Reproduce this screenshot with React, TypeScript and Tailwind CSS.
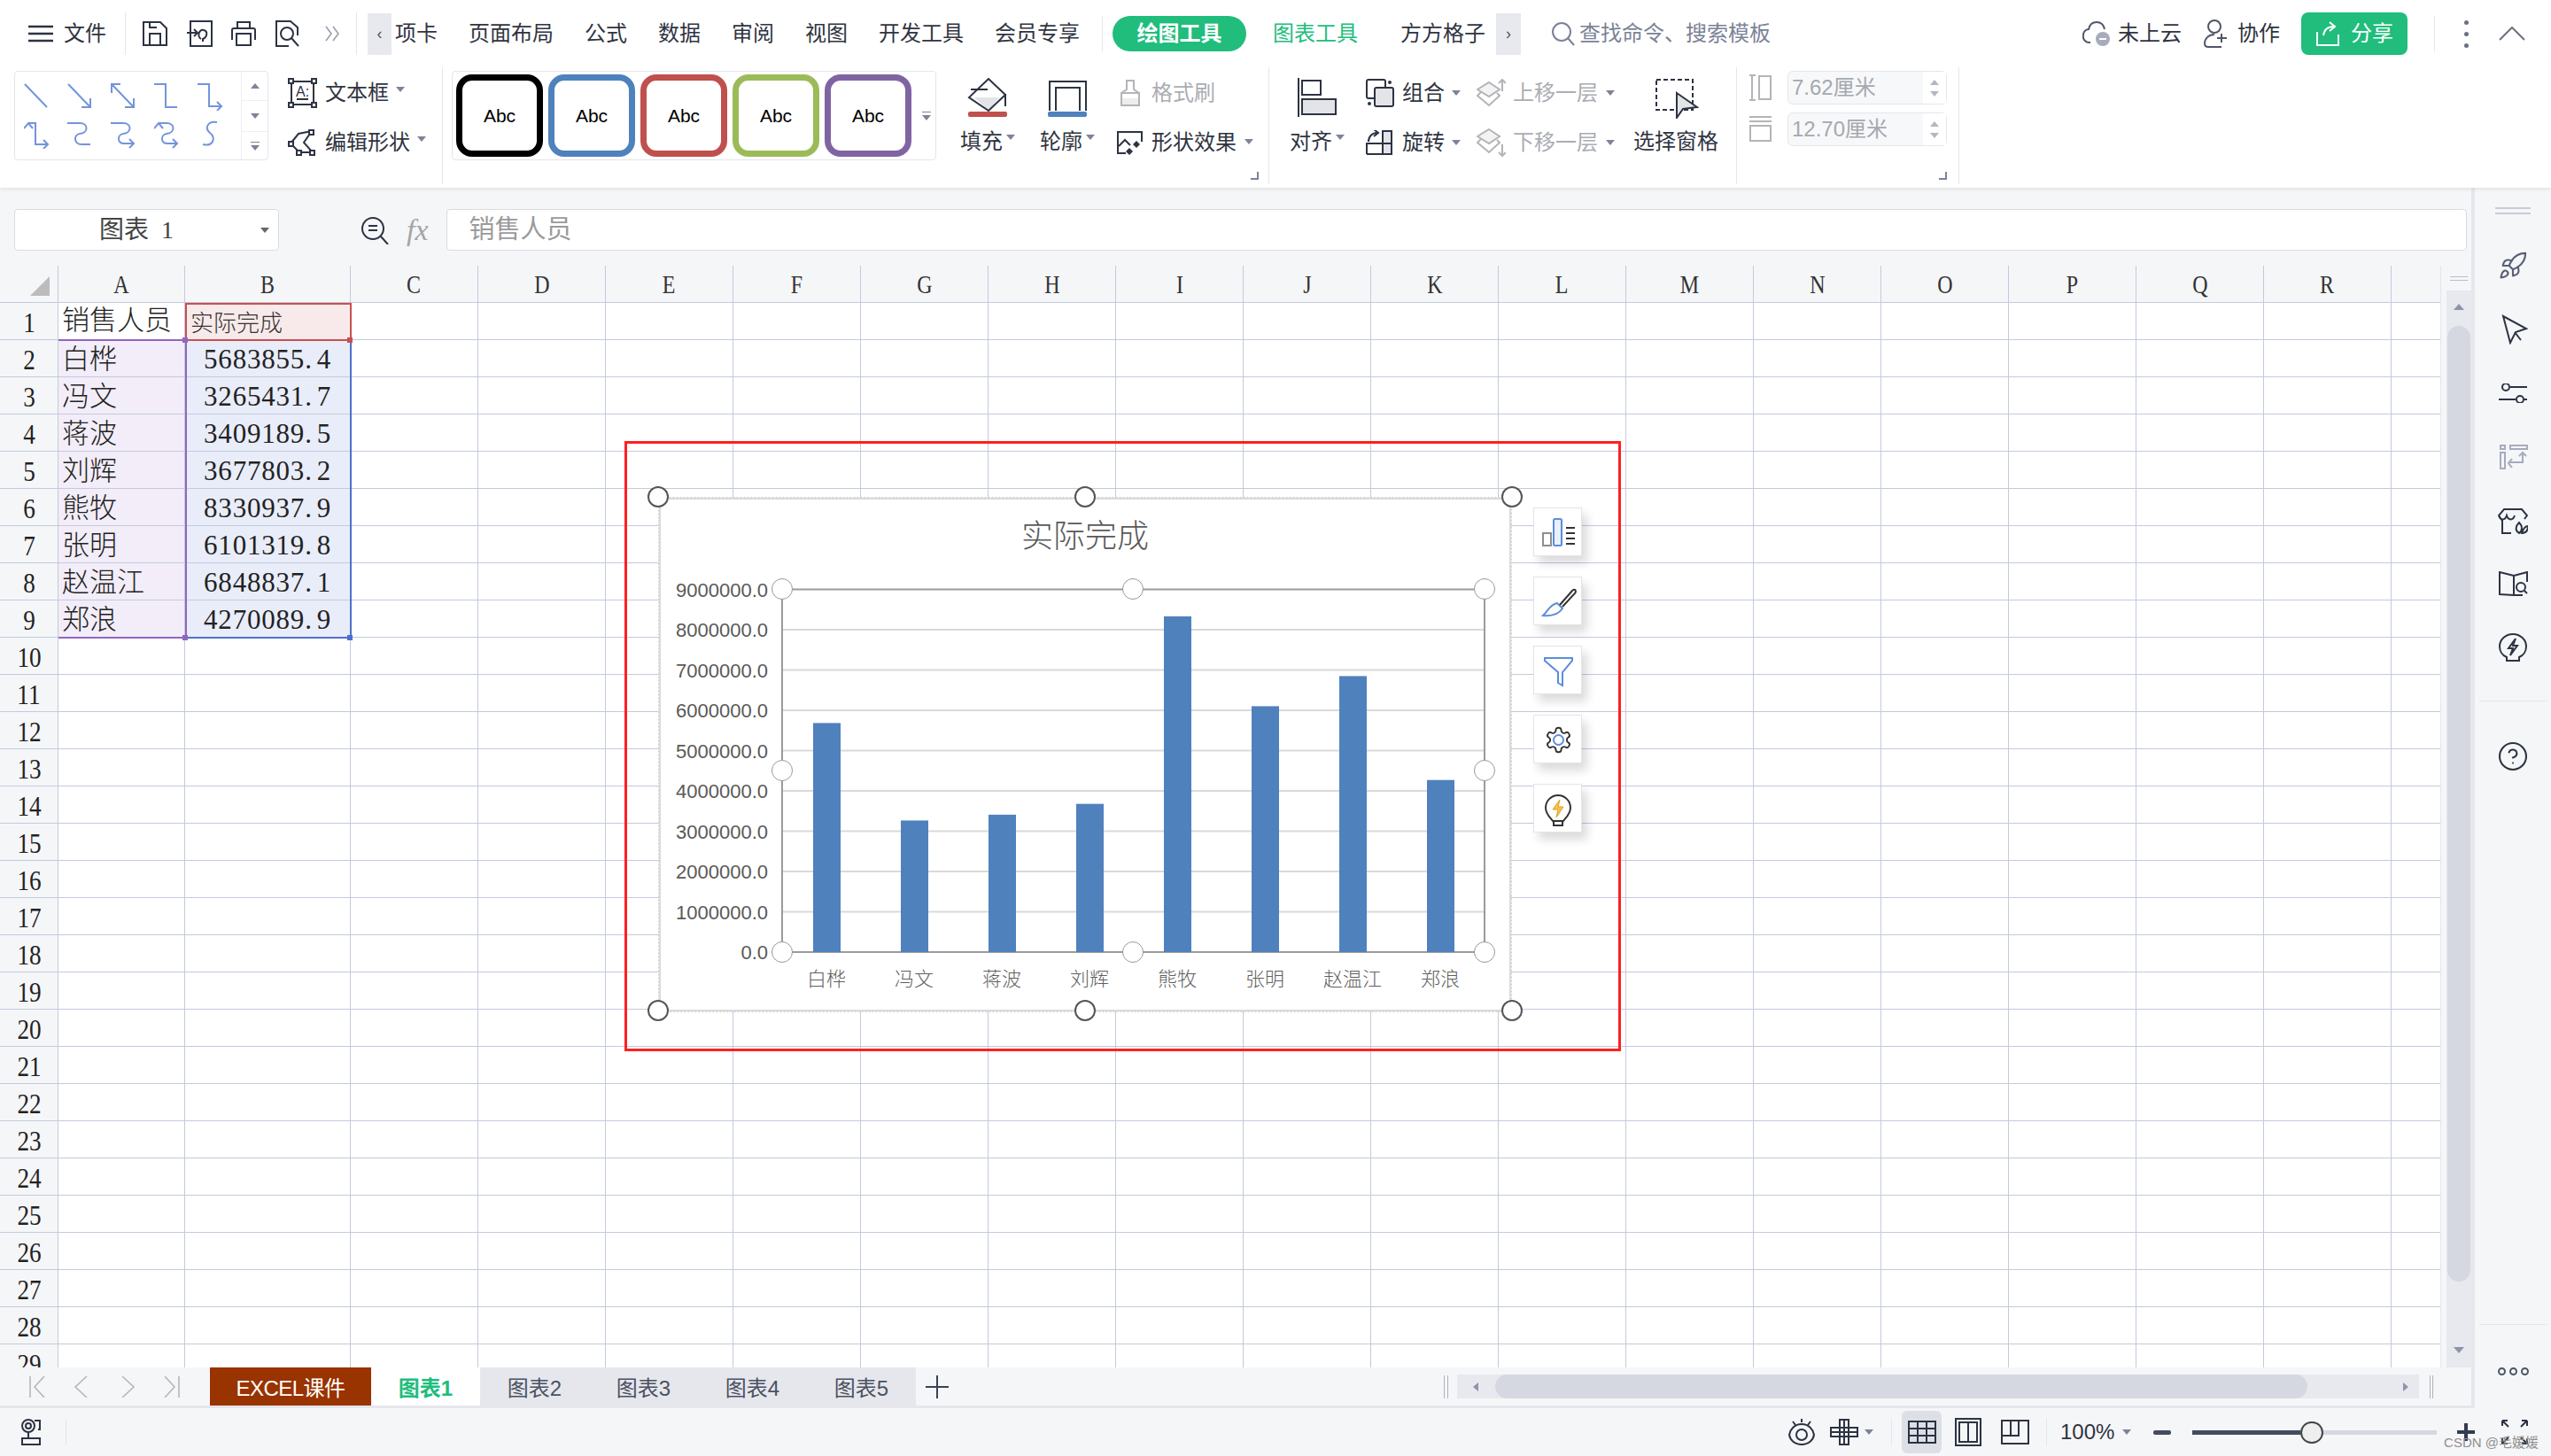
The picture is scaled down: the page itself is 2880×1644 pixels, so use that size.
import type { ReactNode } from "react"
import { Rocket, CircleHelp } from "lucide-react"

const INK = "#2c3342"
const GREY = "#b4b4b8"

function Ico({ w, h, children, className = "" }: { w: number; h: number; children: ReactNode; className?: string }) {
  return (
    <svg width={w} height={h} viewBox={`0 0 ${w} ${h}`} fill="none" stroke={INK} strokeWidth="2" className={"shrink-0 " + className}>
      {children}
    </svg>
  )
}

function Caret({ className = "" }: { className?: string }) {
  return <span className={"inline-block h-0 w-0 shrink-0 border-x-[5px] border-t-[6px] border-x-transparent border-t-[#7d8497] " + className} />
}

function Sep({ className = "" }: { className?: string }) {
  return <div className={"w-px shrink-0 bg-[#e4e6ec] " + className} />
}

function Corner({ className = "" }: { className?: string }) {
  return <span className={"absolute h-[9px] w-[9px] border-b-2 border-r-2 border-[#7d8497] " + className} />
}

/* ---------- top tab bar ---------- */

const tabs = ["项卡", "页面布局", "公式", "数据", "审阅", "视图", "开发工具", "会员专享"]

function TabBar() {
  return (
    <div className="flex h-[72px] shrink-0 items-center bg-white pl-[32px] pt-[4px] text-[24px] text-[#30343f]">
      <Ico w={28} h={20}>
        <path d="M0 2H28M0 10H28M0 18H28" strokeWidth="2.4" />
      </Ico>
      <span className="ml-[12px]">文件</span>
      <Sep className="ml-[21px] h-[48px]" />
      <Ico w={30} h={30} className="ml-[18px]">
        <path d="M2 2H21L28 9V28H2ZM9 28V15H21V28M9 2V8H17" />
      </Ico>
      <Ico w={32} h={32} className="ml-[20px]">
        <path d="M5 2H29V30H5ZM1 15H13M9 11l4 4-4 4M17 22c-5-3-2-12 3-10 5 1 4 8-1 10v3" />
      </Ico>
      <Ico w={30} h={30} className="ml-[18px]">
        <path d="M8 9V2H22V9M2 22V11q0-2 2-2H26q2 0 2 2V22M7 15H23V28H7Z" />
      </Ico>
      <Ico w={30} h={32} className="ml-[20px]">
        <path d="M16 30H2V2H18L26 9V18" />
        <circle cx="14" cy="16" r="7" />
        <path d="M19 21L27 30" />
      </Ico>
      <svg width="18" height="18" viewBox="0 0 18 18" fill="none" stroke="#9a9fae" strokeWidth="1.6" className="ml-[26px] shrink-0">
        <path d="M2 1l6 8-6 8M10 1l6 8-6 8" />
      </svg>
      <Sep className="ml-[18px] h-[48px]" />
      <div className="ml-[12px] flex h-[47px] w-[27px] items-center justify-center bg-[#e7e9ee] text-[18px] text-[#555]">‹</div>
      <div className="ml-[4px] flex gap-[35px]">
        {tabs.map((t) => (
          <span key={t} className="whitespace-nowrap">{t}</span>
        ))}
      </div>
      <Sep className="ml-[25px] h-[40px]" />
      <div className="ml-[11px] flex h-[40px] w-[151px] items-center justify-center rounded-[20px] bg-[#20bd7c] font-bold text-white">绘图工具</div>
      <span className="ml-[30px] text-[#20bd7c]">图表工具</span>
      <span className="ml-[48px]">方方格子</span>
      <div className="ml-[12px] flex h-[47px] w-[28px] items-center justify-center bg-[#e7e9ee] text-[18px] text-[#555]">›</div>
      <svg width="28" height="28" viewBox="0 0 28 28" fill="none" stroke="#7c8296" strokeWidth="2" className="ml-[34px] shrink-0">
        <circle cx="12" cy="12" r="10" />
        <path d="M19 19l7 8" />
      </svg>
      <span className="ml-[4px] text-[#7c8296]">查找命令、搜索模板</span>
      <div className="ml-[352px] flex items-center">
        <svg width="32" height="30" viewBox="0 0 32 30" fill="none" stroke="#4f5668" strokeWidth="2" className="shrink-0">
          <path d="M9 25H8C3 25 0 21 1 16c0-4 4-6 6-6 1-5 4-8 9-8 5 0 8 3 9 8" />
          <circle cx="23" cy="21" r="8" fill="#a6abbd" stroke="none" />
          <path d="M19 21H27" stroke="#fff" />
        </svg>
        <span className="ml-[8px]">未上云</span>
        <svg width="28" height="34" viewBox="0 0 28 34" fill="none" stroke="#4f5668" strokeWidth="2" className="ml-[25px] shrink-0">
          <circle cx="12" cy="9" r="7" />
          <path d="M12 18C5 18 1 23 1 28c0 3 2 4 4 4H20M20 17v10M15 22H26" />
        </svg>
        <span className="ml-[10px]">协作</span>
        <div className="ml-[24px] flex h-[48px] w-[120px] items-center justify-center gap-[12px] rounded-[8px] bg-[#20bd7c] text-white">
          <svg width="28" height="28" viewBox="0 0 28 28" fill="none" stroke="#fff" strokeWidth="2" className="shrink-0">
            <path d="M2 12V27H26V15M9 16C10 9 14 6 21 6M16 1l6 5-6 5" />
          </svg>
          <span>分享</span>
        </div>
        <Sep className="ml-[30px] h-[40px]" />
        <div className="ml-[33px] flex flex-col gap-[8px]">
          <i className="h-[5px] w-[5px] rounded-full bg-[#6b7080]" />
          <i className="h-[5px] w-[5px] rounded-full bg-[#6b7080]" />
          <i className="h-[5px] w-[5px] rounded-full bg-[#6b7080]" />
        </div>
        <svg width="30" height="16" viewBox="0 0 30 16" fill="none" stroke="#6b7080" strokeWidth="2" className="ml-[34px] shrink-0">
          <path d="M1 15L15 1L29 15" />
        </svg>
      </div>
    </div>
  )
}

/* ---------- ribbon ---------- */

const connectors = [
  "M1 2L26 28",
  "M1 2L26 28M26 18V28H16",
  "M1 2L26 28M26 18V28H16M1 12V2H11",
  "M0 2H13V28H26",
  "M0 2H13V27H27M22 22l5 5-5 5",
  "M0 9l5-6 5 6M5 3H13V27H27M22 22l5 5-5 5",
  "M0 3H14C24 3 24 14 14 15 7 16 7 27 16 27H26",
  "M0 3H14C24 3 24 14 14 15 7 16 7 27 16 26H26M21 21l5 5-5 5",
  "M0 9l5-6 5 6M5 3H14C24 3 24 14 14 15 7 16 7 27 16 26H26M21 21l5 5-5 5",
  "M22 2C11 0 8 9 14 14 21 19 18 30 6 27",
]

function ConnectorGallery() {
  return (
    <div className="ml-[16px] flex h-[101px] w-[287px] shrink-0 rounded-[4px] border border-[#e4e6ec]">
      <div className="grid w-[255px] grid-cols-5 grid-rows-2 py-[6px] pr-[10px]">
        {connectors.map((d) => (
          <div key={d} className="flex items-center justify-center">
            <svg width="30" height="32" viewBox="0 0 30 32" fill="none" stroke="#7394dc" strokeWidth="2">
              <path d={d} />
            </svg>
          </div>
        ))}
      </div>
      <div className="flex flex-1 flex-col border-l border-[#eceef2]">
        <div className="flex h-[33px] items-center justify-center border-b border-[#eceef2]">
          <Caret className="rotate-180" />
        </div>
        <div className="flex h-[35px] items-center justify-center border-b border-[#eceef2]">
          <Caret />
        </div>
        <div className="flex flex-1 flex-col items-center justify-center gap-[3px]">
          <i className="h-px w-[10px] bg-[#7d8497]" />
          <Caret />
        </div>
      </div>
    </div>
  )
}

function Row({ children, className = "" }: { children: ReactNode; className?: string }) {
  return <div className={"flex h-[50px] items-center whitespace-nowrap " + className}>{children}</div>
}

function Tall({ w, icon, label, caret = true }: { w: number; icon: ReactNode; label: string; caret?: boolean }) {
  return (
    <div className="flex shrink-0 flex-col items-center pt-[8px]" style={{ width: w }}>
      <div className="flex h-[46px] items-start justify-center">{icon}</div>
      <div className="mt-[8px] flex h-[36px] items-center whitespace-nowrap">
        <span>{label}</span>
        {caret && <Caret className="mb-[10px] ml-[4px]" />}
      </div>
    </div>
  )
}

const swatches = ["border-black", "border-[#4f81bd]", "border-[#c0504d]", "border-[#9bbb59]", "border-[#8064a2]"]

function StyleGallery() {
  return (
    <div className="ml-[10px] flex h-[101px] w-[547px] shrink-0 items-center gap-[6px] rounded-[4px] border border-[#e4e6ec] pl-[4px]">
      {swatches.map((c) => (
        <div key={c} className={"flex h-[93px] w-[98px] shrink-0 items-center justify-center rounded-[18px] border-[7px] bg-white font-['Liberation_Sans'] text-[21px] text-black " + c}>
          Abc
        </div>
      ))}
      <div className="ml-[6px] flex flex-col items-center gap-[3px]">
        <i className="h-px w-[10px] bg-[#7d8497]" />
        <Caret />
      </div>
    </div>
  )
}

function SizeInput({ value }: { value: string }) {
  return (
    <div className="flex h-[38px] w-[180px] items-center rounded-[6px] border border-[#e4e6ec] bg-[#f7f8fa] pl-[4px] text-[#a6a8ae]">
      <span className="flex-1">{value}</span>
      <div className="flex h-full w-[26px] flex-col items-center justify-center gap-[7px] bg-white">
        <Caret className="rotate-180 border-t-[#b3b7c2]" />
        <Caret className="border-t-[#b3b7c2]" />
      </div>
    </div>
  )
}

function Ribbon() {
  return (
    <div className="relative z-10 flex h-[140px] shrink-0 items-start bg-white pt-[8px] text-[24px] text-[#30343f] shadow-[0_2px_4px_rgba(0,0,0,0.08)]">
      <ConnectorGallery />
      <div className="ml-[22px] flex w-[174px] shrink-0 flex-col gap-[6px]">
        <Row>
          <Ico w={33} h={34}>
            <path d="M4 4H29V30H4Z" />
            <rect x="1" y="1" width="5" height="5" fill="#fff" />
            <rect x="27" y="1" width="5" height="5" fill="#fff" />
            <rect x="1" y="28" width="5" height="5" fill="#fff" />
            <rect x="27" y="28" width="5" height="5" fill="#fff" />
            <text x="9" y="21" stroke="none" fill={INK} className="font-['Liberation_Sans'] text-[16px]">A:</text>
            <path d="M10 24H23" />
          </Ico>
          <span className="ml-[9px]">文本框</span>
          <Caret className="mb-[8px] ml-[8px]" />
        </Row>
        <Row>
          <Ico w={33} h={30}>
            <path d="M27 2L12 5L3 16L13 26L28 26L18 15Z" />
            <rect x="24" y="1" width="5" height="5" fill="#fff" />
            <rect x="1" y="14" width="5" height="5" fill="#fff" />
            <rect x="25" y="24" width="5" height="5" fill="#fff" />
            <rect x="10" y="24" width="5" height="5" fill="#fff" />
          </Ico>
          <span className="ml-[9px]">编辑形状</span>
          <Caret className="mb-[8px] ml-[8px]" />
        </Row>
      </div>
      <Sep className="-mt-[4px] h-[132px]" />
      <StyleGallery />
      <div className="relative ml-[11px] flex h-[132px] w-[364px] shrink-0">
        <Tall
          w={94}
          label="填充"
          icon={
            <Ico w={50} h={44}>
              <path d="M10 22H38L26 37Z" fill="#e3e4e8" stroke="none" />
              <path d="M26 1L45 19L26 37L4 22ZM6 13H25M45 18V32" />
              <rect x="3" y="38" width="44" height="6" rx="2" fill="#c0504d" stroke="none" />
            </Ico>
          }
        />
        <div className="ml-[3px]">
          <Tall
            w={80}
            label="轮廓"
            icon={
              <Ico w={46} h={44}>
                <path d="M3 37V4H44V37M10 37V11H37V37" />
                <rect x="1" y="38" width="44" height="6" rx="2" fill="#4f81bd" stroke="none" />
              </Ico>
            }
          />
        </div>
        <div className="ml-[15px] flex flex-col gap-[6px]">
          <Row className="text-[#aaadb3]">
            <svg width="24" height="32" viewBox="0 0 24 32" fill="none" stroke={GREY} strokeWidth="2" className="ml-[4px] shrink-0">
              <path d="M2 16H22V30H2ZM2 16L8 12V2H16V12L22 16" />
              <path d="M3 22H21V29H3Z" fill="#eeeeef" stroke="none" />
            </svg>
            <span className="ml-[12px]">格式刷</span>
          </Row>
          <Row>
            <Ico w={31} h={29}>
              <path d="M11 26H2V2H29V13M3 18L10 11L16 17" />
              <path d="M23 12l4 4-4 4-4-4ZM15 20l4 4-4 4-4-4Z" fill={INK} stroke="none" />
            </Ico>
            <span className="ml-[9px]">形状效果</span>
            <Caret className="mb-[2px] ml-[9px]" />
          </Row>
        </div>
        <Corner className="bottom-[9px] right-[11px]" />
      </div>
      <Sep className="-mt-[4px] h-[132px]" />
      <div className="ml-[14px]">
        <Tall
          w={80}
          label="对齐"
          icon={
            <Ico w={50} h={44}>
              <path d="M4 0V44" />
              <rect x="8" y="3" width="21" height="16" />
              <rect x="8" y="24" width="38" height="17" fill="#e3e4e8" />
            </Ico>
          }
        />
      </div>
      <div className="ml-[15px] flex w-[125px] shrink-0 flex-col gap-[6px]">
        <Row>
          <Ico w={32} h={32}>
            <rect x="1" y="1" width="21" height="21" rx="2" />
            <rect x="10" y="10" width="21" height="21" rx="2" fill="#e3e4e8" />
            <circle cx="27" cy="4" r="2" fill={INK} stroke="none" />
            <circle cx="4" cy="28" r="2" fill={INK} stroke="none" />
          </Ico>
          <span className="ml-[9px]">组合</span>
          <Caret className="ml-[8px]" />
        </Row>
        <Row>
          <Ico w={32} h={28}>
            <rect x="19" y="1" width="10" height="26" fill="#e3e4e8" />
            <path d="M1 27V15H29M3 13C3 7 7 3 13 3M9 -1l5 4-5 4" />
            <path d="M1 27H29" />
          </Ico>
          <span className="ml-[9px]">旋转</span>
          <Caret className="ml-[8px]" />
        </Row>
      </div>
      <div className="flex w-[177px] shrink-0 flex-col gap-[6px] text-[#aaadb3]">
        <Row>
          <svg width="33" height="32" viewBox="0 0 33 32" fill="none" stroke={GREY} strokeWidth="2" className="shrink-0">
            <path d="M14 4L26 12L14 20L1 12Z" fill="#f3f3f4" />
            <path d="M5 15L1 19L14 30L26 19L23 16" />
            <path d="M29 14V1M25 5l4-4 4 4" />
          </svg>
          <span className="ml-[8px]">上移一层</span>
          <Caret className="ml-[9px]" />
        </Row>
        <Row>
          <svg width="33" height="32" viewBox="0 0 33 32" fill="none" stroke={GREY} strokeWidth="2" className="shrink-0">
            <path d="M14 1L26 9L14 17L1 9Z" fill="#f3f3f4" />
            <path d="M5 12L1 16L14 27L26 16L23 13" />
            <path d="M29 18V31M25 27l4 4 4-4" />
          </svg>
          <span className="ml-[8px]">下移一层</span>
          <Caret className="ml-[9px]" />
        </Row>
      </div>
      <Tall
        w={96}
        label="选择窗格"
        caret={false}
        icon={
          <Ico w={50} h={46} className="ml-[2px]">
            <path d="M2 2H43V36H2Z" strokeDasharray="5 3" />
            <path d="M25 17L48 33L32 35L25 45Z" fill="#e3e4e8" />
          </Ico>
        }
      />
      <Sep className="-mt-[4px] ml-[20px] h-[132px]" />
      <div className="relative flex h-[132px] w-[250px] shrink-0 flex-col gap-[9px] pl-[13px]">
        <div className="flex items-center">
          <svg width="27" height="30" viewBox="0 0 27 30" fill="none" stroke={GREY} strokeWidth="2" className="shrink-0">
            <path d="M1 1H8M1 29H8M4 1V29M12 2H25V28H12Z" />
          </svg>
          <div className="ml-[17px]">
            <SizeInput value="7.62厘米" />
          </div>
        </div>
        <div className="flex items-center">
          <svg width="27" height="30" viewBox="0 0 27 30" fill="none" stroke={GREY} strokeWidth="2" className="shrink-0">
            <path d="M1 1H26M1 6H26M2 11H25V28H2Z" />
          </svg>
          <div className="ml-[17px]">
            <SizeInput value="12.70厘米" />
          </div>
        </div>
        <Corner className="bottom-[9px] right-[13px]" />
      </div>
      <Sep className="-mt-[4px] h-[132px]" />
    </div>
  )
}

/* ---------- formula bar ---------- */

function FormulaBar() {
  return (
    <div className="flex h-[88px] shrink-0 items-start pl-[16px] pt-[24px]">
      <div className="flex h-[47px] w-[299px] shrink-0 items-center rounded-[4px] border border-[#d9dbe2] bg-white pl-[95px] pr-[10px] font-['Liberation_Serif','Noto_Sans_CJK_SC',serif] text-[28px] text-[#444]">
        <span className="flex-1 whitespace-pre">图表  1</span>
        <Caret className="border-t-[#666]" />
      </div>
      <svg width="32" height="32" viewBox="0 0 32 32" fill="none" stroke={INK} strokeWidth="2" className="ml-[92px] mt-[8px] shrink-0">
        <circle cx="14" cy="14" r="12" />
        <path d="M9 11H19M9 16H19M23 23L31 32" />
      </svg>
      <span className="ml-[20px] mt-[4px] font-['Liberation_Serif',serif] text-[34px] italic leading-[40px] text-[#a3a5a8]">fx</span>
      <div className="ml-[20px] flex h-[47px] w-[2281px] shrink-0 items-center rounded-[4px] border border-[#d9dbe2] bg-white pl-[25px] font-['Liberation_Serif','Noto_Sans_CJK_SC',serif] text-[29px] text-[#9a9a9a]">
        销售人员
      </div>
    </div>
  )
}

/* ---------- sheet ---------- */

const letters = "ABCDEFGHIJKLMNOPQRS".split("")
const data: [string, string, string, number][] = [
  ["白桦", "5683855.", "4", 5683855.4],
  ["冯文", "3265431.", "7", 3265431.7],
  ["蒋波", "3409189.", "5", 3409189.5],
  ["刘辉", "3677803.", "2", 3677803.2],
  ["熊牧", "8330937.", "9", 8330937.9],
  ["张明", "6101319.", "8", 6101319.8],
  ["赵温江", "6848837.", "1", 6848837.1],
  ["郑浪", "4270089.", "9", 4270089.9],
]
const rowNums = Array.from({ length: 29 }, (_, i) => i + 1)
const line = "border-b border-r border-[#c3cadc]"

function Cell({ row, col }: { row: number; col: number }) {
  if (col === 0 && row === 1) {
    return <div className={"flex items-center whitespace-nowrap pl-[4px] text-[31px] font-light text-[#222] " + line}>销售人员</div>
  }
  if (col === 1 && row === 1) {
    return <div className={"flex items-end whitespace-nowrap bg-[#f8eaea] pl-[6px] text-[26px] font-light leading-[34px] text-[#333] " + line}>实际完成</div>
  }
  if (col === 0 && row <= 9) {
    return <div className={"flex items-center whitespace-nowrap bg-[#f2edf8] pl-[4px] pt-[3px] text-[31px] font-light text-[#222] " + line}>{data[row - 2][0]}</div>
  }
  if (col === 1 && row <= 9) {
    return (
      <div className={"flex items-center justify-end whitespace-pre bg-[#e9edf9] pr-[21px] pt-[3px] text-[31px] tracking-[0.8px] text-[#222] " + line}>
        <span className="pr-[5px]">{data[row - 2][1]}</span>
        <span>{data[row - 2][2]}</span>
      </div>
    )
  }
  return <div className={line} />
}

function Handle({ x, y, big }: { x: number; y: number; big?: boolean }) {
  return <circle cx={x} cy={y} r={big ? 11 : 11.5} fill="#fff" stroke={big ? "#555" : "#999"} strokeWidth={big ? 2 : 1} />
}

const ticks = [0, 1, 2, 3, 4, 5, 6, 7, 8, 9]
const plotL = 883
const plotB = 1075
const plotH = 409.5

function Chart() {
  return (
    <svg viewBox="730 548 990 607" width="990" height="607" className="absolute left-[21px] top-[47px] font-['Liberation_Sans','Noto_Sans_CJK_SC',sans-serif]">
      <rect x="745" y="563" width="960" height="578" fill="#fff" stroke="#dadada" strokeWidth="2" />
      <rect x="743.5" y="561.5" width="963" height="581" fill="none" stroke="#cfcfcf" strokeWidth="1" strokeDasharray="2 2" />
      <text x="1225" y="618" textAnchor="middle" className="fill-[#595959] text-[36px] font-light">实际完成</text>
      {ticks.map((t) => {
        const y = plotB - (plotH * t) / 9
        return (
          <g key={t}>
            <line x1={plotL} x2="1676" y1={y} y2={y} stroke={t === 0 || t === 9 ? "#9a9a9f" : "#d9d9d9"} strokeWidth="2" />
            <text x="867" y={y + 8} textAnchor="end" className="fill-[#595959] text-[22px]">{t === 0 ? "0.0" : `${t}000000.0`}</text>
          </g>
        )
      })}
      <line x1={plotL} x2={plotL} y1="665" y2="1075" stroke="#9a9a9f" strokeWidth="2" />
      <line x1="1676" x2="1676" y1="665" y2="1075" stroke="#9a9a9f" strokeWidth="2" />
      {data.map(([name, , , v], i) => {
        const h = (v / 9000000) * plotH
        return (
          <g key={name}>
            <rect x={918 + i * 99} y={plotB - h} width="31" height={h} fill="#4f81bd" />
            <text x={933 + i * 99} y="1113" textAnchor="middle" className="fill-[#5f5f5f] text-[22px] font-light">{name}</text>
          </g>
        )
      })}
      <Handle x={883} y={665} />
      <Handle x={1279} y={665} />
      <Handle x={1676} y={665} />
      <Handle x={883} y={870} />
      <Handle x={1676} y={870} />
      <Handle x={883} y={1075} />
      <Handle x={1279} y={1075} />
      <Handle x={1676} y={1075} />
      <Handle x={743} y={561} big />
      <Handle x={1225} y={561} big />
      <Handle x={1707} y={561} big />
      <Handle x={743} y={1141} big />
      <Handle x={1225} y={1141} big />
      <Handle x={1707} y={1141} big />
    </svg>
  )
}

function ChartButtons() {
  return (
    <div className="absolute left-[1022px] top-[72px] flex flex-col gap-[23px]">
      <ChartBtn>
        <rect x="10" y="28" width="9" height="14" stroke="#8e8e8e" />
        <rect x="22" y="12" width="9" height="30" rx="1.5" fill="#eaf0fb" stroke="#5b8ddc" />
        <path d="M36 22H46M36 28H46M36 34H46M36 40H46" stroke="#333" />
      </ChartBtn>
      <ChartBtn>
        <path d="M10 43C16 38 17 31 26 29L32 35C28 41 20 44 10 43Z" stroke="#5b8ddc" />
        <path d="M29 31L43 15C46 12 48 15 46 18L32 33" stroke="#333" />
      </ChartBtn>
      <ChartBtn>
        <path d="M12 13H43V16L32 29V44L27 41V29L12 16Z" stroke="#5b8ddc" />
      </ChartBtn>
      <ChartBtn>
        <g transform="translate(11 11) scale(1.375)" strokeWidth="1.4">
          <path d="M12.22 2h-.44a2 2 0 0 0-2 2v.18a2 2 0 0 1-1 1.73l-.43.25a2 2 0 0 1-2 0l-.15-.08a2 2 0 0 0-2.73.73l-.22.38a2 2 0 0 0 .73 2.73l.15.1a2 2 0 0 1 1 1.72v.51a2 2 0 0 1-1 1.74l-.15.09a2 2 0 0 0-.73 2.73l.22.38a2 2 0 0 0 2.73.73l.15-.08a2 2 0 0 1 2 0l.43.25a2 2 0 0 1 1 1.73V20a2 2 0 0 0 2 2h.44a2 2 0 0 0 2-2v-.18a2 2 0 0 1 1-1.73l.43-.25a2 2 0 0 1 2 0l.15.08a2 2 0 0 0 2.73-.73l.22-.39a2 2 0 0 0-.73-2.73l-.15-.08a2 2 0 0 1-1-1.74v-.5a2 2 0 0 1 1-1.74l.15-.09a2 2 0 0 0 .73-2.73l-.22-.38a2 2 0 0 0-2.73-.73l-.15.08a2 2 0 0 1-2 0l-.43-.25a2 2 0 0 1-1-1.73V4a2 2 0 0 0-2-2z" stroke="#333" />
        </g>
        <circle cx="27.5" cy="27.5" r="5.5" stroke="#5b8ddc" />
      </ChartBtn>
      <ChartBtn>
        <path d="M21 41C18 37 13 33 13 26a14 14 0 0 1 28 0C41 33 36 37 33 41H21ZM22 41V46H32V41" stroke="#333" />
        <path d="M29 17L21 28H27L25 37L33 25H27Z" fill="#f3c44d" stroke="#e0a020" strokeWidth="1" />
      </ChartBtn>
    </div>
  )
}

function ChartBtn({ children }: { children: ReactNode }) {
  return (
    <div className="h-[55px] w-[55px] border border-[#e4e4e4] bg-white shadow-[6px_8px_10px_rgba(0,0,0,0.14)]">
      <svg width="55" height="55" viewBox="0 0 55 55" fill="none" strokeWidth="2">
        {children}
      </svg>
    </div>
  )
}

function Square({ className }: { className: string }) {
  return <i className={"absolute h-[6px] w-[6px] " + className} />
}

function VScroll() {
  return (
    <div className="flex w-[35px] shrink-0 flex-col border-l border-[#e4e6ec]">
      <div className="flex h-[28px] flex-col items-center justify-center gap-[3px] pl-[6px]">
        <i className="h-px w-[20px] bg-[#b9bdc9]" />
        <i className="h-px w-[20px] bg-[#b9bdc9]" />
      </div>
      <div className="ml-[6px] flex flex-1 flex-col items-center bg-[#e8e9ee] px-[1px] pt-[15px]">
        <Caret className="rotate-180 border-x-[6px] border-t-[7px] border-t-[#8d94ab]" />
        <div className="mt-[18px] h-[1079px] w-full rounded-full bg-[#d5d8e0]" />
        <Caret className="mt-[74px] border-x-[6px] border-t-[7px] border-t-[#8d94ab]" />
      </div>
    </div>
  )
}

function Sheet() {
  return (
    <div className="flex h-[1244px] shrink-0">
      <div className="relative w-[2755px] shrink-0 overflow-hidden">
        <div className="grid w-[2844px] grid-cols-[66px_143px_187px_repeat(17,144px)] auto-rows-[42px] bg-white font-['Liberation_Serif','Noto_Sans_CJK_SC',serif]">
          <div className="flex items-center justify-end border-b border-r border-[#c3cadc] bg-[#f5f6f8] pr-[9px]">
            <svg width="22" height="22" viewBox="0 0 22 22" className="mt-[5px]">
              <path d="M22 0V22H0Z" fill="#bcbcbc" />
            </svg>
          </div>
          {letters.map((l) => (
            <div key={l} className="flex items-center justify-center border-b border-r border-[#c3cadc] bg-[#f5f6f8] text-[30px] text-[#333]">
              <span className="scale-x-[0.8]">{l}</span>
            </div>
          ))}
          {rowNums.map((r) => (
            <div key={r} className="contents">
              <div className="flex items-center justify-center border-b border-r border-[#c3cadc] bg-[#f5f6f8] pt-[2px] text-[32px] text-[#222]">
                <span className="scale-x-[0.85]">{r}</span>
              </div>
              {letters.map((l, c) => (
                <Cell key={l} row={r} col={c} />
              ))}
            </div>
          ))}
        </div>
        {/* selection marks over the data range */}
        <div className="absolute left-[66px] top-[83px] h-[338px] w-[145px] border-y-2 border-r-2 border-[#9166c0]" />
        <div className="absolute left-[211px] top-[85px] h-[336px] w-[186px] border-b-2 border-r-2 border-[#4d70d0]" />
        <div className="absolute left-[209px] top-[42px] h-[43px] w-[188px] border-2 border-[#c85050]" />
        <Square className="left-[206px] top-[81px] bg-[#9166c0]" />
        <Square className="left-[206px] top-[417px] bg-[#9166c0]" />
        <Square className="left-[392px] top-[417px] bg-[#4d70d0]" />
        <Square className="left-[392px] top-[81px] bg-[#c85050]" />
        {/* chart with the red marker frame */}
        <div className="absolute left-[705px] top-[198px] h-[689px] w-[1125px] border-[3px] border-[#ff2020]">
          <div className="relative left-[1px]">
            <Chart />
            <ChartButtons />
          </div>
        </div>
      </div>
      <VScroll />
    </div>
  )
}

function SheetTabs() {
  return (
    <div className="flex h-[46px] shrink-0 items-start border-b-[3px] border-[#e6e7ec] text-[24px] leading-[43px]">
      <div className="flex h-[43px] w-[237px] shrink-0 items-center pl-[33px]">
        <svg width="170" height="24" viewBox="0 0 170 24" fill="none" stroke="#b5b7bd" strokeWidth="1.6">
          <path d="M1 0V24M17 0L6 12L17 24M65 0L52 12L65 24M105 0L118 12L105 24M153 0L164 12L153 24M169 0V24" />
        </svg>
      </div>
      <div className="flex h-[43px] w-[182px] items-center justify-center bg-[#993300] pt-[3px] tracking-[-0.5px] text-white">EXCEL课件</div>
      <div className="flex h-[43px] w-[123px] items-center justify-center bg-white pt-[3px] font-bold text-[#20bd7c]">图表1</div>
      {["图表2", "图表3", "图表4", "图表5"].map((t) => (
        <div key={t} className="flex h-[43px] w-[123px] items-center justify-center bg-[#e6e7ec] pt-[3px] text-[#4b5163]">{t}</div>
      ))}
      <svg width="26" height="26" viewBox="0 0 26 26" stroke="#3b4254" strokeWidth="2" className="ml-[11px] mt-[9px] shrink-0">
        <path d="M13 0V26M0 13H26" />
      </svg>
      <div className="ml-[559px] mt-[9px] flex h-[26px] gap-[3px]">
        <i className="w-px bg-[#aeb2bd]" />
        <i className="w-px bg-[#aeb2bd]" />
      </div>
      <div className="ml-[10px] mt-[8px] flex h-[27px] w-[1086px] items-center bg-[#e8e9ee]">
        <Caret className="ml-[16px] h-0 w-0 rotate-90 border-t-[#8d94ab]" />
        <div className="ml-[17px] h-full w-[917px] rounded-full bg-[#d5d8e0]" />
        <Caret className="ml-[106px] rotate-[-90deg] border-t-[#8d94ab]" />
      </div>
      <div className="ml-[12px] mt-[9px] flex h-[26px] gap-[2px]">
        <i className="w-px bg-[#aeb2bd]" />
        <i className="w-px bg-[#aeb2bd]" />
      </div>
    </div>
  )
}

/* ---------- right side panel ---------- */

function SidePanel() {
  return (
    <div className="flex w-[90px] shrink-0 flex-col items-center border-l-[4px] border-[#e6e7ec] text-[#4d5568]">
      <div className="mt-[22px] flex h-[8px] flex-col justify-between">
        <i className="h-[2px] w-[40px] bg-[#c9ccd4]" />
        <i className="h-[2px] w-[40px] bg-[#c9ccd4]" />
      </div>
      <Rocket size={34} strokeWidth={1.5} className="mt-[41px] text-[#586074]" />
      <Ico w={34} h={34} className="mt-[38px]">
        <path d="M6 2L32 16L20 20L14 32Z M19 20L26 29" />
      </Ico>
      <Ico w={34} h={22} className="mt-[44px]">
        <circle cx="9" cy="4" r="4" fill="none" />
        <path d="M14 4H33M1 18H20M30 18H33" />
        <circle cx="25" cy="18" r="4" />
      </Ico>
      <svg width="34" height="28" viewBox="0 0 34 28" fill="none" stroke="#a6abbd" strokeWidth="2" className="mt-[47px] shrink-0">
        <rect x="3" y="1" width="5" height="4" />
        <rect x="3" y="9" width="5" height="18" />
        <rect x="14" y="1" width="19" height="4" />
        <path d="M28 10V20H13M16 16l-4 5 4 5M24 13l4-4 4 4" />
      </svg>
      <Ico w={34} h={30} className="mt-[44px]">
        <path d="M5 14L1 8L7 1H27L33 8L30 12M5 12V28H15M1 8C3 14 8 14 10 8C12 14 17 14 19 8" />
        <path d="M24 28c-5-3-4-8 0-12 4 4 4 9 0 12ZM27 28c2-6 4-8 7-8 0 5-2 8-7 8Z" />
      </Ico>
      <Ico w={34} h={28} className="mt-[41px]">
        <path d="M18 5L2 1V26L18 27V5ZM18 5L33 1V12M18 27H28" />
        <circle cx="26" cy="18" r="5" />
        <path d="M30 22L33 25" />
      </Ico>
      <Ico w={32} h={32} className="mt-[42px]">
        <path d="M9 31V27C4 25 1 20 1 15A15 14 0 0 1 31 15C31 20 28 25 23 27V31Z" />
        <path d="M19 6L11 17H16L13 25L21 14H16Z" />
      </Ico>
      <i className="mt-[44px] h-px w-[76px] bg-[#e4e6ec]" />
      <CircleHelp size={36} strokeWidth={1.4} className="mt-[44px] text-[#2c3342]" />
      <i className="mt-[623px] h-px w-[76px] bg-[#e4e6ec]" />
      <div className="mt-[48px] flex gap-[4px]">
        <i className="h-[9px] w-[9px] rounded-full border-2 border-[#4d5568]" />
        <i className="h-[9px] w-[9px] rounded-full border-2 border-[#4d5568]" />
        <i className="h-[9px] w-[9px] rounded-full border-2 border-[#4d5568]" />
      </div>
    </div>
  )
}

/* ---------- status bar ---------- */

function StatusBar() {
  return (
    <div className="relative flex h-[54px] shrink-0 items-center bg-[#f5f6f8] pl-[23px] text-[#30343f]">
      <Ico w={32} h={30}>
        <circle cx="9" cy="8" r="7" />
        <circle cx="9" cy="8" r="3" />
        <path d="M16 2H22V12H20M9 15V22M2 22H22V29H2Z" />
      </Ico>
      <Sep className="ml-[19px] h-[30px]" />
      <div className="ml-[1943px] flex items-center">
        <Ico w={32} h={30}>
          <path d="M16 6C8 6 3 12 2 18C3 24 8 29 16 29C24 29 29 24 30 18C29 12 24 6 16 6Z" />
          <circle cx="16" cy="18" r="6" />
          <path d="M16 0V4M6 3L9 7M26 3L23 7" />
        </Ico>
        <Ico w={32} h={30} className="ml-[16px]">
          <path d="M11 1H21V10H31V20H21V29H11V20H1V10H11ZM11 10V20H21V10ZM16 1V29M1 15H31" />
        </Ico>
        <Caret className="ml-[7px]" />
        <Sep className="ml-[20px] h-[30px]" />
        <div className="ml-[11px] flex h-[48px] w-[45px] items-center justify-center rounded-[6px] bg-[#dcdfe6]">
          <Ico w={32} h={26}>
            <path d="M1 1H31V25H1ZM1 9H31M1 17H31M11 1V25M21 1V25" />
          </Ico>
        </div>
        <Ico w={30} h={32} className="ml-[15px]">
          <path d="M1 1H29V31H1ZM5 5H25V27H5ZM15 5V27" />
        </Ico>
        <Ico w={32} h={28} className="ml-[22px]">
          <path d="M1 1H31V27H1ZM1 18H20V1M11 1V18" />
        </Ico>
        <Sep className="ml-[19px] h-[30px]" />
        <span className="ml-[15px] font-['Liberation_Sans'] text-[24px]">100%</span>
        <Caret className="ml-[9px]" />
        <i className="ml-[25px] h-[5px] w-[20px] rounded-[2px] bg-[#434b60]" />
        <div className="ml-[24px] flex items-center">
          <i className="h-[5px] w-[122px] bg-[#434b60]" />
          <i className="h-[25px] w-[26px] rounded-full border-2 border-[#444] bg-[#eeeeee]" />
          <i className="h-[5px] w-[128px] bg-[#d5d8e0]" />
        </div>
        <svg width="20" height="20" viewBox="0 0 20 20" stroke="#333c50" strokeWidth="4" className="ml-[23px] shrink-0">
          <path d="M10 0V20M0 10H20" />
        </svg>
        <svg width="30" height="28" viewBox="0 0 30 28" fill="none" stroke={INK} strokeWidth="2" className="ml-[30px] shrink-0">
          <path d="M1 1H7M1 1V7M1 1L8 8M29 1H23M29 1V7M29 1L22 8M1 27H7M1 27V21M1 27L8 20M29 27H23M29 27V21M29 27L22 20" />
        </svg>
      </div>
      <span className="absolute right-[14px] top-[28px] whitespace-nowrap text-[15px] text-[#8f8f8f]">CSDN @毛媛媛</span>
    </div>
  )
}

export default function App() {
  return (
    <div className="flex h-[1644px] w-[2880px] flex-col overflow-hidden bg-[#f5f6f8] font-['Liberation_Sans','Noto_Sans_CJK_SC',sans-serif]">
      <TabBar />
      <Ribbon />
      <div className="flex h-[1378px] shrink-0">
        <div className="flex w-[2790px] shrink-0 flex-col">
          <FormulaBar />
          <Sheet />
          <SheetTabs />
        </div>
        <SidePanel />
      </div>
      <StatusBar />
    </div>
  )
}
